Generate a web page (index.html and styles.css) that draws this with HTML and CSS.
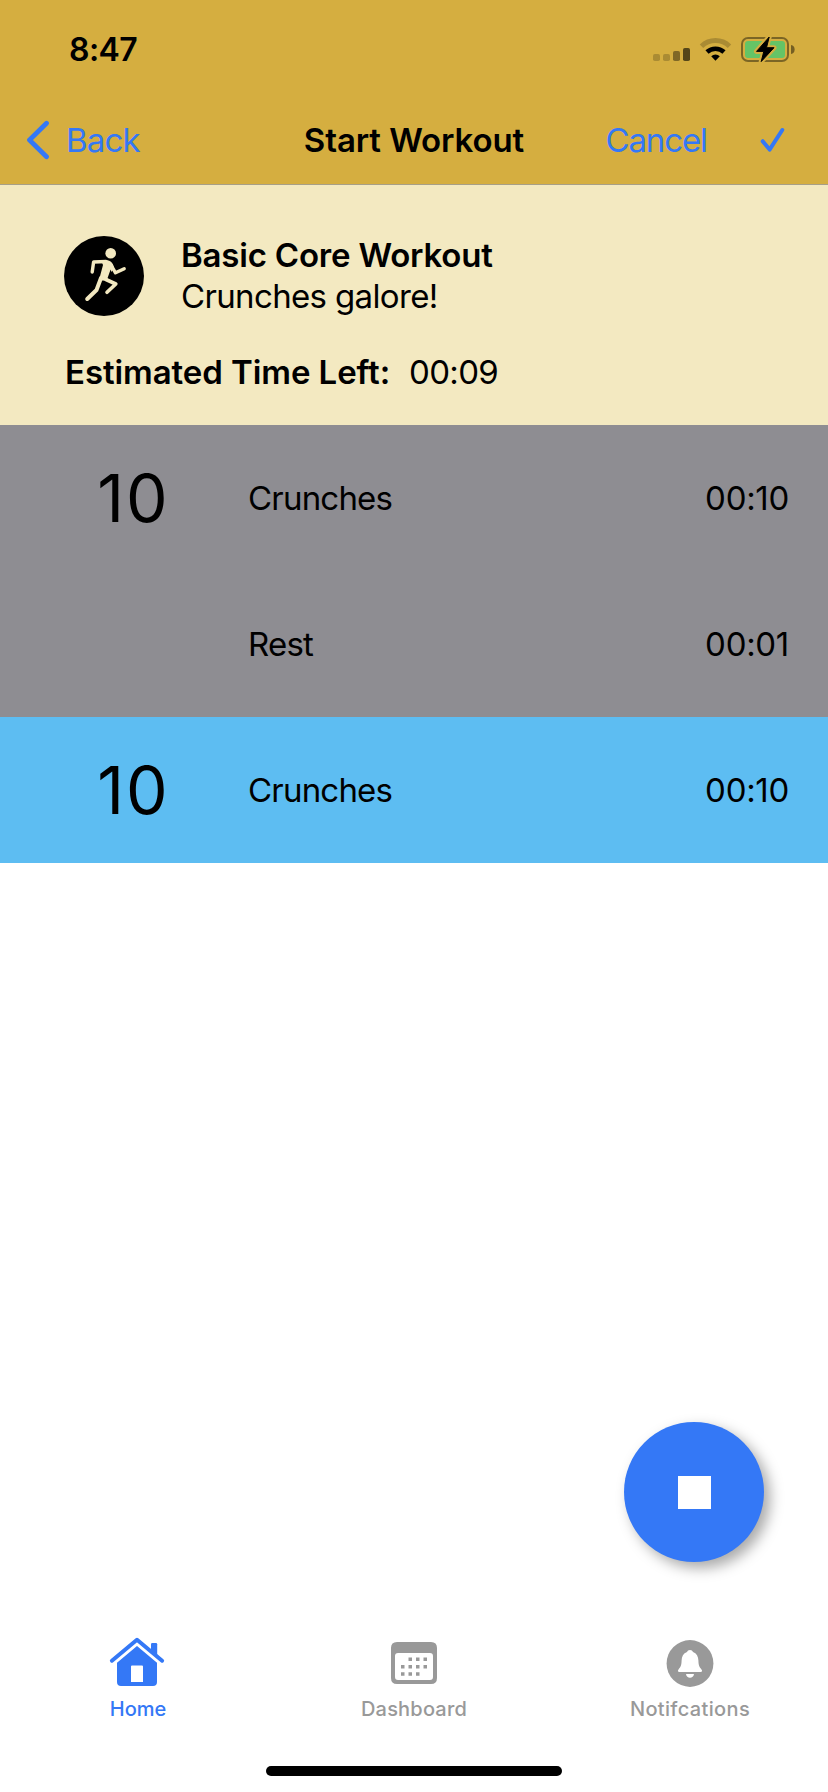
FILE: index.html
```html
<!DOCTYPE html>
<html lang="en">
<head>
<meta charset="utf-8">
<title>Start Workout</title>
<link rel="stylesheet" href="styles.css">
</head>
<body>
<div class="app">
  <header class="header">
    <div class="status">
      <span class="clock">8:47</span>
      <svg class="status-icons" width="144" height="30" viewBox="0 0 144 30">
        <rect x="1" y="19" width="7" height="7" rx="1.8" opacity=".2"/>
        <rect x="11" y="19" width="7" height="7" rx="1.8" opacity=".2"/>
        <rect x="21" y="16" width="7" height="10" rx="1.8" opacity=".4"/>
        <rect x="31" y="13" width="7" height="13" rx="1.8" opacity=".6"/>
        <path d="M49.5 11.2A20.3 20.3 0 0 1 77.5 11.2" fill="none" stroke="#000" stroke-width="5" opacity=".2"/>
        <path d="M55 17A12.6 12.6 0 0 1 72 17" fill="none" stroke="#000" stroke-width="4.6"/>
        <path d="M59.2 21.2A6.5 6.5 0 0 1 67.8 21.2L63.5 25.8Z"/>
        <rect x="90" y="3" width="46" height="23" rx="6" fill="none" stroke="#000" stroke-width="2" opacity=".42"/>
        <path d="M139 10a4.6 4.6 0 0 1 0 9z" opacity=".45"/>
        <rect x="93" y="6" width="40" height="17" rx="3" fill="#65c466"/>
        <path d="M117.2 2L104.5 16.4H111.8L109.2 26.6L122 12.7H114.5Z" stroke="#d5ae40" stroke-width="5" stroke-linejoin="round"/>
        <path d="M117.2 2L104.5 16.4H111.8L109.2 26.6L122 12.7H114.5Z" stroke="#000" stroke-width="1" stroke-linejoin="round"/>
      </svg>
    </div>
    <nav class="nav">
      <a class="back">
        <svg width="24" height="40" viewBox="0 0 24 40"><path d="M20.5 3.3L3.5 20L20.5 36.7" fill="none" stroke="#3478f6" stroke-width="4.8" stroke-linecap="round" stroke-linejoin="round"/></svg>
        <span>Back</span>
      </a>
      <h1 class="title">Start Workout</h1>
      <div class="actions">
        <span>Cancel</span>
        <svg width="26" height="26" viewBox="0 0 26 26"><path d="M2.7 14.2L9.6 22.6L22.3 3" fill="none" stroke="#3478f6" stroke-width="4" stroke-linecap="round" stroke-linejoin="round"/></svg>
      </div>
    </nav>
  </header>
  <section class="summary">
    <div class="workout">
      <svg width="80" height="80" viewBox="0 0 80 80">
        <circle cx="40" cy="40" r="40"/>
        <g fill="none" stroke="#f3e9c1" stroke-linecap="round" stroke-linejoin="round">
          <path d="M28.2 36L29.6 26L42 25.5" stroke-width="3.4"/>
          <path d="M47 29L51.5 36.8L60.2 32.7" stroke-width="3.4"/>
          <path d="M42 43.5L51.8 48L43 56.3" stroke-width="3.6"/>
          <path d="M37 42L32.5 54L23.2 63" stroke-width="4"/>
        </g>
        <path d="M37 24.3H43.5Q47 24.8 49 28.5L50 31.5L47.5 36L46.6 33.5L43.4 42.5L44 45L38.5 44.5L35 44L39 29Z" fill="#f3e9c1"/>
        <circle cx="46.7" cy="17.3" r="5.3" fill="#f3e9c1"/>
      </svg>
      <div class="workout-text">
        <h2 class="name">Basic Core Workout</h2>
        <p class="desc">Crunches galore!</p>
      </div>
    </div>
    <div class="remaining"><b class="left-label">Estimated Time Left:</b><span class="remaining-time">00:09</span></div>
  </section>
  <ul class="steps">
    <li class="step"><span class="reps">10</span><span class="exercise">Crunches</span><span class="time">00:10</span></li>
    <li class="step"><span class="reps"></span><span class="exercise">Rest</span><span class="time">00:01</span></li>
    <li class="step current"><span class="reps">10</span><span class="exercise">Crunches</span><span class="time">00:10</span></li>
  </ul>
  <main class="space"><button class="stop" aria-label="Stop"><i class="stop-icon"></i></button></main>
  <footer class="tabs">
    <a class="tab active">
      <svg width="58" height="52" viewBox="0 0 58 52" fill="#3478f6">
        <path d="M2.9 25.7L28 4.8L53.1 25.7" fill="none" stroke="#3478f6" stroke-width="4" stroke-linecap="round" stroke-linejoin="round"/>
        <path d="M42 16V9.2Q42 8 43.2 8H47Q48.2 8 48.2 9.2V20Z"/>
        <path fill-rule="evenodd" d="M28 11L48 27.8V47Q48 51 44 51H12Q8 51 8 47V27.8ZM23 30.5Q22 30.5 22 31.5V47H34V31.5Q34 30.5 33 30.5Z"/>
      </svg>
      <span>Home</span>
    </a>
    <a class="tab">
      <svg width="56" height="52" viewBox="0 0 56 52" fill="#999">
        <path fill-rule="evenodd" d="M11 7H45Q51 7 51 13V43Q51 49 45 49H11Q5 49 5 43V13Q5 7 11 7ZM12 18Q9 18 9 21V42Q9 45 12 45H44Q47 45 47 42V21Q47 18 44 18Z"/>
        <path d="M22.5 22.5h3.5v3.5h-3.5zM30 22.5h3.5v3.5h-3.5zM37.5 22.5h3.5v3.5h-3.5zM15 30h3.5v3.5h-3.5zM22.5 30h3.5v3.5h-3.5zM30 30h3.5v3.5h-3.5zM37.5 30h3.5v3.5h-3.5zM15 37.3h3.5v3.5h-3.5zM22.5 37.3h3.5v3.5h-3.5zM30 37.3h3.5v3.5h-3.5z"/>
      </svg>
      <span class="dashboard-label">Dashboard</span>
    </a>
    <a class="tab">
      <svg width="57" height="52" viewBox="0 0 57 52">
        <circle cx="28" cy="28.5" r="23.4" fill="#999"/>
        <path d="M28 15C29.6 15 30.5 15.8 31 16.9C34.7 18.3 36.3 21.2 36.4 25.5C36.5 31 37.5 31.9 39.5 34.5C40.6 36 40 37 38.7 37H17.3C16 37 15.4 36 16.5 34.5C18.5 31.9 19.5 31 19.6 25.5C19.7 21.2 21.3 18.3 25 16.9C25.5 15.8 26.4 15 28 15ZM24 39H32C31.7 41.5 30 42.8 28 42.8S24.3 41.5 24 39Z" fill="#fff"/>
      </svg>
      <span class="notifications-label">Notifcations</span>
    </a>
  </footer>
  <div class="home-indicator"></div>
</div>
</body>
</html>
```
FILE: styles.css
```css
* { box-sizing: border-box; margin: 0; padding: 0; }
body { background: #fff; color: #000; font-family: Inter, "Liberation Sans", sans-serif; font-size: 33px; line-height: 42px; }
svg { display: block; flex: none; }
.app { display: flex; flex-direction: column; width: 828px; height: 1792px; overflow: hidden; white-space: nowrap; }

.header { height: 185px; background: #d5ae40; border-bottom: 1px solid #a79f87; }
.status { display: flex; justify-content: space-between; align-items: center; height: 100px; padding: 0 32px 0 69px; }
.clock { font-size: 32px; font-weight: 600; letter-spacing: -.6px; }
.nav { display: grid; grid-template-columns: 280px 1fr 280px; align-items: center; height: 80px; }
.back { display: flex; align-items: center; gap: 16px; padding-left: 26px; color: #3478f6; letter-spacing: -.8px; }
.title { font-size: 33px; font-weight: 600; text-align: center; letter-spacing: -.1px; }
.actions { display: flex; justify-content: flex-end; align-items: center; gap: 53px; padding-right: 42px; color: #3478f6; letter-spacing: -1.1px; }

.summary { height: 240px; padding: 51px 64px 0; background: #f3e9c1; }
.workout { display: flex; gap: 37px; height: 115px; }
.workout-text { margin-top: -1px; line-height: 41px; }
.name { font-size: 33px; font-weight: 600; letter-spacing: -.2px; }
.desc { letter-spacing: -.65px; }
.remaining { display: flex; align-items: center; gap: 19px; padding-left: 1px; }
.left-label { font-weight: 600; letter-spacing: -.08px; }
.remaining-time { letter-spacing: -.7px; }

.steps { list-style: none; background: #8e8d92; }
.step { display: grid; grid-template-columns: 248px 1fr auto; align-items: center; height: 146px; padding-right: 39px; }
.current { background: #5dbdf2; }
.reps { padding-left: 19px; text-align: center; font-size: 66px; line-height: 80px; letter-spacing: 2px; }
.exercise { letter-spacing: -.8px; }
.time { letter-spacing: -.3px; }

.space { display: flex; flex: 1; justify-content: flex-end; align-items: flex-end; padding: 0 64px 59px 0; }
.stop { display: flex; justify-content: center; align-items: center; width: 140px; height: 140px; border: 0; border-radius: 50%; background: #3478f6; box-shadow: 6px 6px 14px rgba(0, 0, 0, .34); }
.stop-icon { width: 33px; height: 33px; background: #fff; }

.tabs { display: grid; grid-template-columns: repeat(3, 1fr); height: 145px; padding-top: 14px; color: #999; font-size: 20px; font-weight: 500; line-height: 24px; }
.tab { display: flex; flex-direction: column; align-items: center; gap: 10px; }
.active { color: #3478f6; }
.dashboard-label { letter-spacing: .2px; }
.notifications-label { letter-spacing: .35px; }
.home-indicator { flex: none; align-self: center; width: 296px; height: 10px; margin-bottom: 16px; border-radius: 5px; background: #000; }
```
